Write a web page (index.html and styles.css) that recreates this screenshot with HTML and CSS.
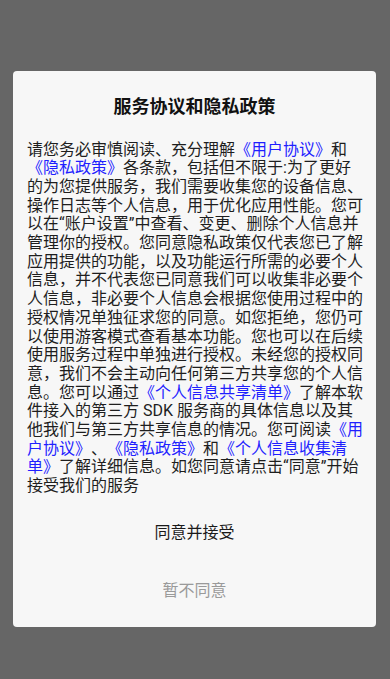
FILE: index.html
```html
<!DOCTYPE html>
<html lang="zh-CN">
<head>
<meta charset="utf-8">
<meta name="viewport" content="width=device-width, initial-scale=1">
<link rel="stylesheet" href="styles.css">
</head>
<body>
<div class="dialog">
  <div class="title">服务协议和隐私政策</div>
  <div class="content">请您务必审慎阅读、充分理解<span class="link">《用户协议》</span>和<span class="link">《隐私政策》</span>各条款，包括但不限于:为了更好的为您提供服务，我们需要收集您的设备信息、操作日志等个人信息，用于优化应用性能。您可以在“账户设置”中查看、变更、删除个人信息并管理你的授权。您同意隐私政策仅代表您已了解应用提供的功能，以及功能运行所需的必要个人信息，并不代表您已同意我们可以收集非必要个人信息，非必要个人信息会根据您使用过程中的授权情况单独征求您的同意。如您拒绝，您仍可以使用游客模式查看基本功能。您也可以在后续使用服务过程中单独进行授权。未经您的授权同意，我们不会主动向任何第三方共享您的个人信息。您可以通过<span class="link">《个人信息共享清单》</span>了解本软件接入的第三方 SDK 服务商的具体信息以及其他我们与第三方共享信息的情况。您可阅读<span class="link">《用户协议》</span>、<span class="link">《隐私政策》</span>和<span class="link">《个人信息收集清单》</span>了解详细信息。如您同意请点击“同意”开始接受我们的服务</div>
  <div class="btn btn-accept">同意并接受</div>
  <div class="btn btn-reject">暂不同意</div>
</div>
</body>
</html>
```

FILE: styles.css
```css
html, body {
  margin: 0;
  padding: 0;
  background: #666666;
  height: 100%;
}
body {
  font-family: Roboto, "Noto Sans CJK SC", sans-serif;
  padding-top: 71px;
  box-sizing: border-box;
}
.dialog {
  margin-left: 13px;
  width: 363px;
  height: 556px;
  background: #f7f7f7;
  border-radius: 4px;
  box-sizing: border-box;
  padding-top: 24.5px;
  display: flex;
  flex-direction: column;
}
.title {
  text-align: center;
  font-size: 18px;
  line-height: 21px;
  font-weight: bold;
  color: #111111;
}
.content {
  margin-top: 24px;
  padding: 0 11px 0 14px;
  font-size: 16px;
  line-height: 18.7px;
  color: #1e1e1e;
  word-break: normal;
  line-break: strict;
  text-spacing-trim: space-all;
}
.link {
  color: #1f1fff;
}
.btn {
  height: 58px;
  display: flex;
  align-items: center;
  justify-content: center;
  font-size: 16px;
}
.btn-accept {
  margin-top: 6.3px;
  color: #1a1a1a;
}
.btn-reject {
  color: #9a9a9a;
}
```
